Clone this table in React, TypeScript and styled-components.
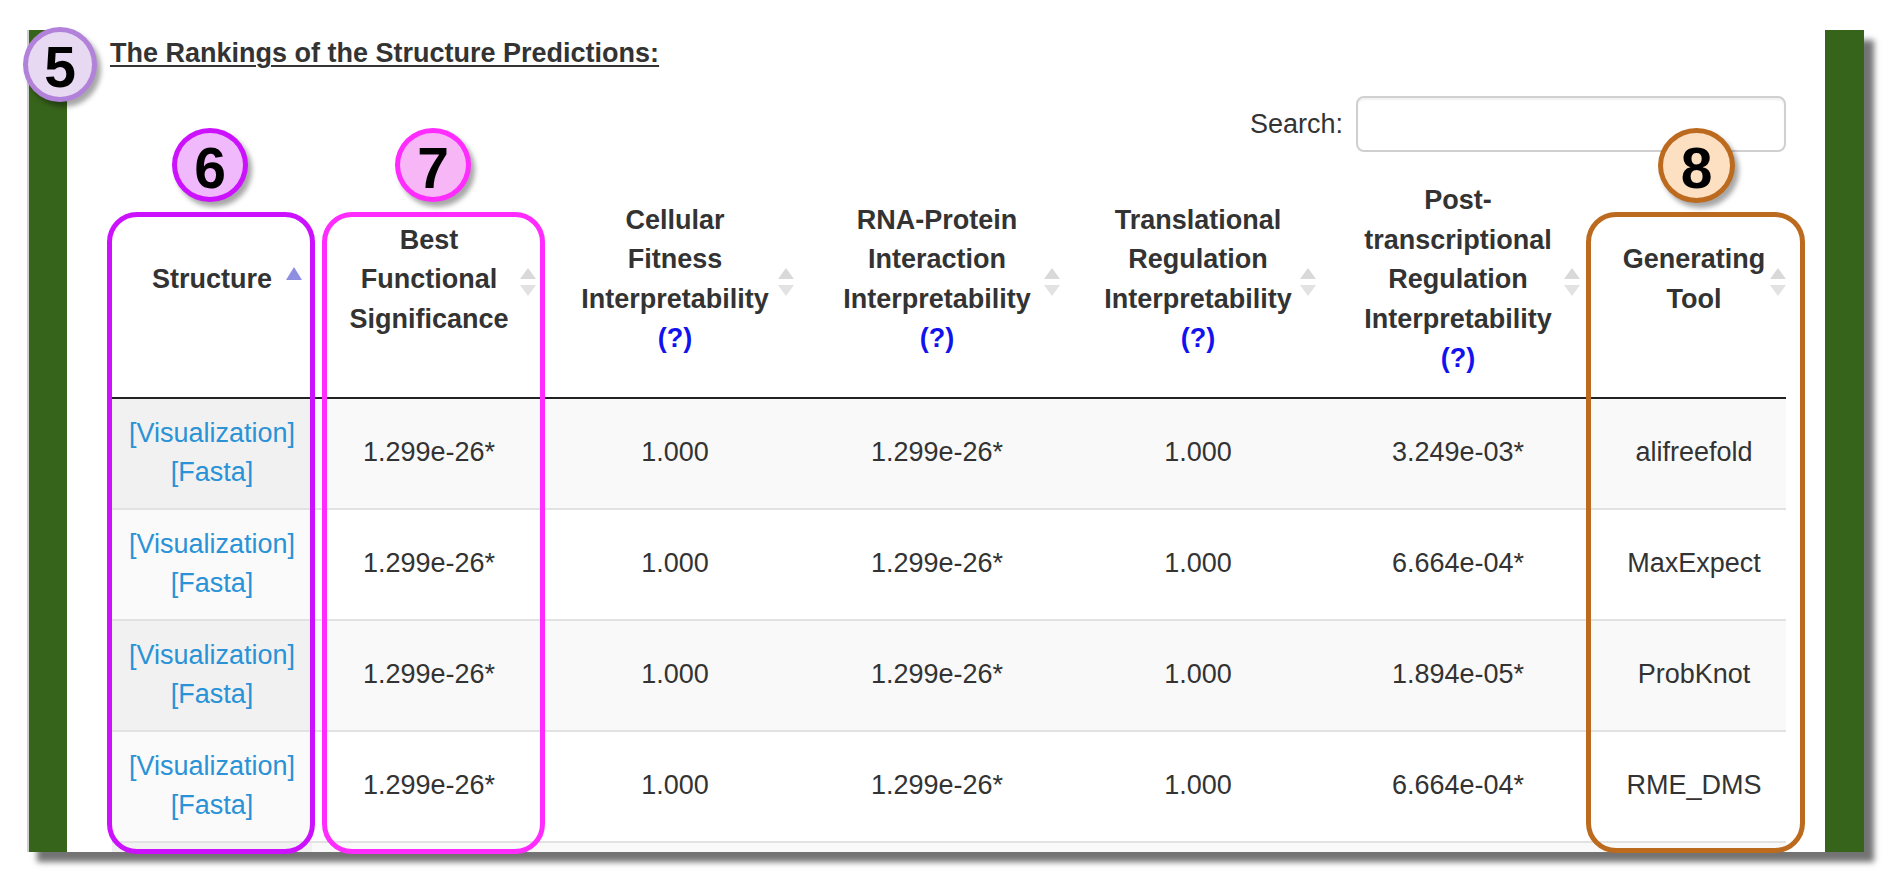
import React from "react";
import styled, { createGlobalStyle } from "styled-components";

const GlobalStyle = createGlobalStyle`
  html, body {
    margin: 0;
    padding: 0;
    background: #fff;
  }
  body {
    font-family: "Liberation Sans", Arial, sans-serif;
    color: #333;
    min-height: 874px;
  }
`;

interface Column {
  lines: string[];
  width: number;
  help?: boolean;
  sort: "asc" | "both";
}

interface Ranking {
  best: string;
  fitness: string;
  protein: string;
  translational: string;
  post: string;
  tool: string;
}

const columns: Column[] = [
  { lines: ["Structure"], width: 200, sort: "asc" },
  { lines: ["Best", "Functional", "Significance"], width: 234, sort: "both" },
  { lines: ["Cellular", "Fitness", "Interpretability"], width: 258, help: true, sort: "both" },
  { lines: ["RNA-Protein", "Interaction", "Interpretability"], width: 266, help: true, sort: "both" },
  { lines: ["Translational", "Regulation", "Interpretability"], width: 256, help: true, sort: "both" },
  { lines: ["Post-", "transcriptional", "Regulation", "Interpretability"], width: 264, help: true, sort: "both" },
  { lines: ["Generating", "Tool"], width: 196, sort: "both" },
];

const rankings: Ranking[] = [
  { best: "1.299e-26*", fitness: "1.000", protein: "1.299e-26*", translational: "1.000", post: "3.249e-03*", tool: "alifreefold" },
  { best: "1.299e-26*", fitness: "1.000", protein: "1.299e-26*", translational: "1.000", post: "6.664e-04*", tool: "MaxExpect" },
  { best: "1.299e-26*", fitness: "1.000", protein: "1.299e-26*", translational: "1.000", post: "1.894e-05*", tool: "ProbKnot" },
  { best: "1.299e-26*", fitness: "1.000", protein: "1.299e-26*", translational: "1.000", post: "6.664e-04*", tool: "RME_DMS" },
];

// annotation marks drawn over the screenshot
const badges = [
  { n: "5", x: -4, y: -3, w: 74, h: 75, fill: "#e8d9f3", ring: "#b282da" },
  { n: "6", x: 145, y: 98, w: 76, h: 74, fill: "#f0b9fb", ring: "#cc11ff" },
  { n: "7", x: 368, y: 98, w: 76, h: 74, fill: "#f7b7f7", ring: "#ff2bff" },
  { n: "8", x: 1631, y: 98, w: 77, h: 75, fill: "#fddfc2", ring: "#bb6a1e" },
];

const callouts = [
  { x: 80, y: 182, w: 208, h: 642, ring: "#cc11ff" },
  { x: 295, y: 182, w: 223, h: 642, ring: "#ff2bff" },
  { x: 1559, y: 182, w: 219, h: 641, ring: "#bb6a1e" },
];

export default function App() {
  return (
    <>
      <GlobalStyle />
      <Frame>
        <Panel>
          <SideBar $w={38} />
          <Content>
            <Title>The Rankings of the Structure Predictions:</Title>
            <SearchRow>
              <SearchLabel>Search:</SearchLabel>
              <SearchInput type="search" />
            </SearchRow>
            <Table>
              <colgroup>
                {columns.map((c, i) => (
                  <Col key={i} $w={c.width} />
                ))}
              </colgroup>
              <thead>
                <tr>
                  {columns.map((c, i) => (
                    <Th key={i}>
                      {c.lines.map((l, j) => (
                        <Line key={j}>{l}</Line>
                      ))}
                      {c.help && <Help href="#">(?)</Help>}
                      <SortIcon dir={c.sort} />
                    </Th>
                  ))}
                </tr>
              </thead>
              <tbody>
                {rankings.map((r, i) => (
                  <Tr key={i} $odd={i % 2 === 0}>
                    <Td>
                      <StructLink href="#">[Visualization]</StructLink>
                      <br />
                      <StructLink href="#">[Fasta]</StructLink>
                    </Td>
                    <Td>{r.best}</Td>
                    <Td>{r.fitness}</Td>
                    <Td>{r.protein}</Td>
                    <Td>{r.translational}</Td>
                    <Td>{r.post}</Td>
                    <Td>{r.tool}</Td>
                  </Tr>
                ))}
                <Tr $odd>
                  {columns.map((_, i) => (
                    <Td key={i}>&nbsp;</Td>
                  ))}
                </Tr>
              </tbody>
            </Table>
          </Content>
          <SideBar $w={39} />
        </Panel>

        {callouts.map((c, i) => (
          <Callout key={i} $x={c.x} $y={c.y} $w={c.w} $h={c.h} $ring={c.ring} />
        ))}
        {badges.map((b) => (
          <Badge key={b.n} $x={b.x} $y={b.y} $w={b.w} $h={b.h} $fill={b.fill} $ring={b.ring}>
            {b.n}
          </Badge>
        ))}
      </Frame>
    </>
  );
}

function SortIcon({ dir }: { dir: "asc" | "both" }) {
  if (dir === "asc") {
    return (
      <Arrow width="16" height="13" viewBox="0 0 16 13" $up>
        <polygon points="8,0 16,13 0,13" fill="#8f8fe2" />
      </Arrow>
    );
  }
  return (
    <Arrow width="16" height="28" viewBox="0 0 16 28">
      <polygon points="8,0 16,11 0,11" fill="#d9d9d9" />
      <polygon points="0,17 16,17 8,28" fill="#e2e2e2" />
    </Arrow>
  );
}

//  styling
const Frame = styled.div`
  position: relative;
  width: 1837px;
  margin: 30px 0 0 27px;
`;

const Panel = styled.div`
  display: flex;
  height: 822px;
  overflow: hidden;
  border-left: 2px solid #cfcfcf;
  box-shadow: 10px 10px 6px rgba(0, 0, 0, 0.55);
`;

const SideBar = styled.div<{ $w: number }>`
  flex: 0 0 ${(p) => p.$w}px;
  background: #37641b;
`;

const Content = styled.div`
  flex: 1;
  min-width: 0;
  background: #fff;
  padding: 8px 39px 0 45px;
`;

const Title = styled.h2`
  margin: 0 0 0 -2px;
  font-size: 27px;
  line-height: 31px;
  font-weight: bold;
  color: #333;
  text-decoration: underline;
  text-decoration-thickness: 2px;
  text-underline-offset: 3px;
`;

const SearchRow = styled.div`
  display: flex;
  justify-content: flex-end;
  align-items: center;
  gap: 13px;
  margin-top: 27px;
  height: 56px;
`;

const SearchLabel = styled.label`
  font-size: 27px;
  color: #333;
`;

const SearchInput = styled.input`
  box-sizing: border-box;
  width: 430px;
  height: 56px;
  border: 2px solid #d0d0d0;
  border-radius: 8px;
  box-shadow: inset 0 2px 2px rgba(0, 0, 0, 0.06);
  outline: none;
  font: inherit;
`;

const Table = styled.table`
  width: 100%;
  margin-top: 11px;
  table-layout: fixed;
  border-collapse: separate;
  border-spacing: 0;
  font-size: 27px;
  line-height: 39.5px;
  color: #333;
`;

const Col = styled.col<{ $w: number }>`
  width: ${(p) => p.$w}px;
`;

const Th = styled.th`
  position: relative;
  padding: 18px 16px;
  text-align: center;
  vertical-align: middle;
  font-weight: bold;
  border-bottom: 2px solid #222;
  &:last-child {
    padding: 18px 4px 18px 16px;
  }
  &:last-child > svg {
    right: 0;
  }
`;

const Line = styled.span`
  display: block;
  white-space: nowrap;
`;

const Help = styled.a`
  display: block;
  color: #1212ee;
  text-decoration: none;
`;

const Arrow = styled.svg<{ $up?: boolean }>`
  position: absolute;
  right: 10px;
  top: ${(p) => (p.$up ? "calc(50% - 13px)" : "calc(50% - 12px)")};
`;

const Tr = styled.tr<{ $odd?: boolean }>`
  background: ${(p) => (p.$odd ? "#f9f9f9" : "#fff")};
  td:first-child {
    background: ${(p) => (p.$odd ? "#f1f1f1" : "#fafafa")};
  }
  &:first-child td {
    border-top: none;
  }
`;

const Td = styled.td`
  padding: 15px 16px;
  text-align: center;
  vertical-align: middle;
  border-top: 2px solid #e2e2e2;
  white-space: nowrap;
  &:last-child {
    padding: 15px 4px 15px 16px;
  }
`;

const StructLink = styled.a`
  color: #2a92d6;
  text-decoration: none;
`;

const Badge = styled.div<{
  $x: number;
  $y: number;
  $w: number;
  $h: number;
  $fill: string;
  $ring: string;
}>`
  position: absolute;
  left: ${(p) => p.$x}px;
  top: ${(p) => p.$y}px;
  width: ${(p) => p.$w}px;
  height: ${(p) => p.$h}px;
  box-sizing: border-box;
  padding-top: 6px;
  border-radius: 50%;
  border: 5px solid ${(p) => p.$ring};
  background: ${(p) => p.$fill};
  box-shadow: 4px 5px 5px rgba(0, 0, 0, 0.35);
  display: flex;
  align-items: center;
  justify-content: center;
  font: bold 57px/1 "Liberation Sans", Arial, sans-serif;
  color: #000;
`;

const Callout = styled.div<{
  $x: number;
  $y: number;
  $w: number;
  $h: number;
  $ring: string;
}>`
  position: absolute;
  left: ${(p) => p.$x}px;
  top: ${(p) => p.$y}px;
  width: ${(p) => p.$w}px;
  height: ${(p) => p.$h}px;
  box-sizing: border-box;
  border: 5px solid ${(p) => p.$ring};
  border-radius: 30px;
  pointer-events: none;
`;
